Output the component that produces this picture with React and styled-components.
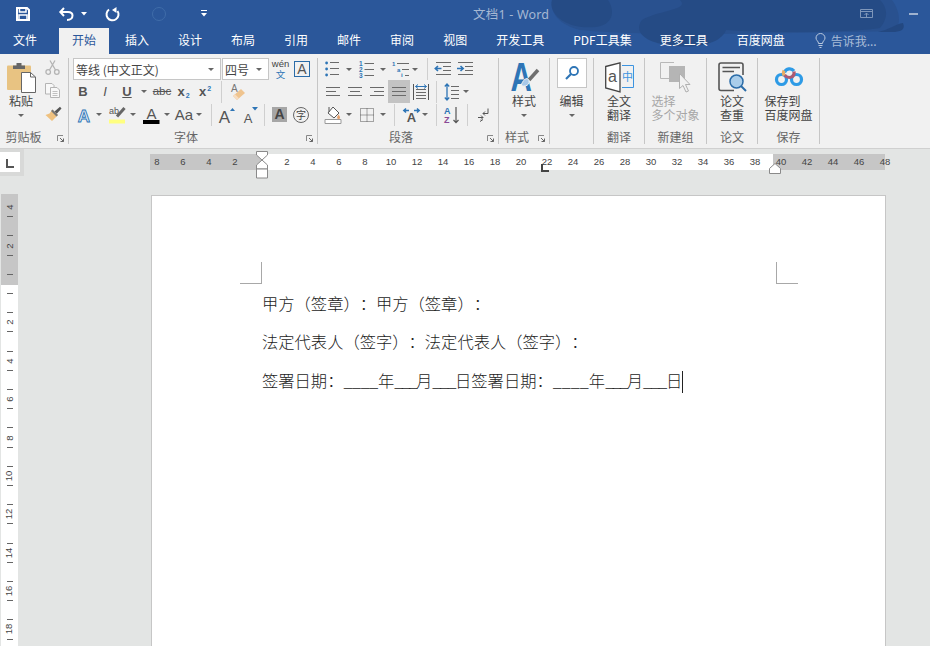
import React from "react";
import styled, { createGlobalStyle } from "styled-components";

const GlobalStyle = createGlobalStyle`
  html, body { margin: 0; padding: 0; background: #e3e5e4; }
  body {
    font-family: "Noto Sans CJK SC", "Noto Sans", sans-serif;
    text-spacing-trim: space-all;
    overflow: hidden;
  }
  svg { overflow: visible; }
`;

const UI_FONT = `"Noto Sans CJK SC", "Noto Sans", sans-serif`;
const LATIN = `"Liberation Sans", Arial, sans-serif`;

const Root = styled.div`
  width: 930px;
  height: 646px;
  overflow: hidden;
  display: flex;
  flex-direction: column;
`;

const Header = styled.header`
  position: relative;
  background: #2b579a;
  height: 54px;
  flex: none;
`;

const Watermark = styled.svg`
  position: absolute;
  left: 0;
  top: 0;
`;

const TitleBar = styled.div`
  position: relative;
  display: flex;
  align-items: center;
  height: 27px;
`;

const QuickAccess = styled.div`
  width: 473px;
  flex: none;
  display: flex;
  align-items: center;
  padding-left: 16px;
  box-sizing: border-box;
`;

const QuickIcon = styled.svg`
  margin-left: ${(p) => p.$ml || 0}px;
  flex: none;
`;

const Title = styled.div`
  font-family: "Noto Sans", ${UI_FONT};
  font-size: 12.5px;
  letter-spacing: 0.2px;
  color: #a5b8d3;
  white-space: nowrap;
`;

const WindowControls = styled.div`
  margin-left: auto;
  padding-right: 12px;
  display: flex;
  align-items: center;
  gap: 36px;
`;

const TabRow = styled.nav`
  position: relative;
  display: flex;
  gap: 3px;
  height: 27px;
`;

const Tab = styled.div`
  padding: 0 13px;
  margin-right: ${(p) => p.$mr || 0}px;
  height: 26px;
  margin-top: 1px;
  line-height: 24px;
  font-size: 12px;
  color: ${(p) => (p.$active ? "#2b579a" : "#fff")};
  background: ${(p) => (p.$active ? "#f1f1f1" : "transparent")};
  white-space: nowrap;
`;

const TellMe = styled.div`
  margin-left: 14px;
  display: flex;
  align-items: center;
  gap: 5px;
  font-size: 12px;
  color: #a9bcd7;
  height: 26px;
`;

const Ribbon = styled.section`
  flex: none;
  height: 95px;
  box-sizing: border-box;
  padding-top: 4px;
  background: #f1f1f1;
  border-bottom: 1px solid #d0d0d0;
  display: flex;
  align-items: flex-start;
  color: #444;
  font-size: 12px;
`;

const Group = styled.div`
  width: ${(p) => p.$w}px;
  height: 86px;
  flex: none;
  box-sizing: border-box;
  border-right: 1px solid #c6c6c6;
  display: flex;
  flex-direction: column;
`;

const GroupBody = styled.div`
  height: 72px;
  flex: none;
  display: ${(p) => (p.$row ? "flex" : "block")};
`;

const Footer = styled.div`
  height: 14px;
  display: flex;
  align-items: center;
`;

const FooterLabel = styled.div`
  flex: 1;
  text-align: center;
  font-size: 12px;
  line-height: 14px;
  color: #666;
  padding-right: ${(p) => p.$pr || 0}px;
`;

const Launcher = styled.svg`
  flex: none;
  margin: 2px 4px 0 3px;
`;

const ToolRow = styled.div`
  display: flex;
  align-items: center;
  height: ${(p) => p.$h || 23}px;
`;

const Tool = styled.div`
  width: ${(p) => p.$w}px;
  height: ${(p) => p.$h || 20}px;
  margin-left: ${(p) => p.$ml || 0}px;
  flex: none;
  display: flex;
  align-items: center;
  justify-content: center;
  background: ${(p) => p.$bg || "transparent"};
`;

const Letter = styled.span`
  font-family: ${(p) => (p.$serif ? `"Liberation Serif", serif` : LATIN)};
  font-size: ${(p) => p.$size || 13}px;
  font-weight: ${(p) => (p.$bold ? 700 : 400)};
  font-style: ${(p) => (p.$italic ? "italic" : "normal")};
  text-decoration: ${(p) => p.$deco || "none"};
  color: ${(p) => p.$color || "#555"};
  line-height: 1.2;
`;

const Sub = styled.span`
  font-family: ${LATIN};
  font-size: 7px;
  font-weight: 700;
  color: #2e75b6;
  align-self: ${(p) => (p.$up ? "flex-start" : "flex-end")};
  margin: ${(p) => (p.$up ? "3px 0 0 1px" : "0 0 3px 1px")};
`;

const Caret = styled.i`
  display: block;
  width: 0;
  height: 0;
  border-left: 3px solid transparent;
  border-right: 3px solid transparent;
  border-top: 3px solid #666;
`;

const Divider = styled.div`
  width: 1px;
  height: 22px;
  flex: none;
  margin-left: ${(p) => p.$ml || 0}px;
  background: #cfcfcf;
`;

const Select = styled.div`
  width: ${(p) => p.$w}px;
  height: 22px;
  margin-left: ${(p) => p.$ml || 0}px;
  flex: none;
  box-sizing: border-box;
  background: #fff;
  border: 1px solid #c6c6c6;
  display: flex;
  align-items: center;
  justify-content: space-between;
  padding: 0 6px 0 2px;
  font-size: 12px;
  color: #444;
  white-space: nowrap;
`;

const BoxedLetter = styled.div`
  width: 16px;
  height: 16px;
  margin-left: 5px;
  flex: none;
  box-sizing: border-box;
  border: 1px solid #2b6ca8;
  display: flex;
  align-items: center;
  justify-content: center;
`;

const CircleChar = styled.div`
  width: 16px;
  height: 16px;
  box-sizing: border-box;
  border: 1px solid #666;
  border-radius: 50%;
  font-size: 10px;
  line-height: 14px;
  text-align: center;
  color: #444;
`;

const Phonetic = styled.div`
  width: 17px;
  margin-left: 3px;
  flex: none;
  display: flex;
  flex-direction: column;
  align-items: center;
  font-size: 9.5px;
  line-height: 10px;
  color: #2e75b6;
  span:first-child {
    font-family: ${LATIN};
    color: #444;
  }
`;

const BigButton = styled.div`
  width: ${(p) => p.$w || "100%"};
  flex: none;
  display: flex;
  flex-direction: column;
  align-items: center;
  font-size: 12px;
  line-height: 14px;
  color: ${(p) => (p.$disabled ? "#a6a6a6" : "#444")};
  white-space: nowrap;
`;

const BigIcon = styled.div`
  height: 36px;
  display: flex;
  align-items: flex-start;
  justify-content: center;
  padding-top: ${(p) => p.$pt ?? 4}px;
  box-sizing: border-box;
`;

const BigCaret = styled(Caret)`
  margin-top: 6px;
`;

const EditBox = styled.div`
  width: 30px;
  height: 30px;
  box-sizing: border-box;
  background: #fff;
  border: 1px solid #c6c6c6;
  display: flex;
  align-items: center;
  justify-content: center;
`;

const SmallColumn = styled.div`
  display: flex;
  flex-direction: column;
  gap: 8px;
  padding: 2px 0 0 3px;
`;

const RulerBar = styled.div`
  position: relative;
  flex: none;
  height: 45px;
  display: flex;
  align-items: flex-start;
`;

const Corner = styled.div`
  width: 24px;
  height: 27px;
  flex: none;
  box-sizing: border-box;
  padding: 3px 4px 4px 0;
  background: #d8d9d8;
`;

const CornerInner = styled.div`
  width: 20px;
  height: 20px;
  background: #fff;
  display: flex;
  align-items: flex-end;
  justify-content: center;
  padding-bottom: 4px;
  box-sizing: border-box;
`;

const Ruler = styled.div`
  position: relative;
  width: 735px;
  height: 16px;
  margin: 5px 0 0 126px;
  background: linear-gradient(90deg, #c6c6c6 111px, #fff 111px, #fff 623px, #c6c6c6 623px);
`;

const RulerStrip = styled.div`
  display: flex;
  margin-left: -6px;
`;

const RulerNum = styled.div`
  width: 26px;
  flex: none;
  text-align: center;
  font-family: ${LATIN};
  font-size: 9.5px;
  line-height: 16px;
  color: #444;
`;

const Marker = styled.svg`
  position: absolute;
  left: ${(p) => p.$x}px;
  top: ${(p) => p.$y}px;
`;

const Body = styled.div`
  flex: 1;
  min-height: 0;
  display: flex;
  align-items: flex-start;
`;

const VRuler = styled.div`
  width: 17px;
  height: 452px;
  margin-left: 1px;
  flex: none;
  overflow: hidden;
  background: linear-gradient(180deg, #c6c6c6 91px, #fff 91px);
`;

const VStrip = styled.div`
  margin-top: -6px;
`;

const VCell = styled.div`
  height: 38.4px;
  box-sizing: border-box;
  padding: 9.1px 0;
  display: flex;
  flex-direction: column;
  align-items: center;
  justify-content: space-between;
`;

const VTick = styled.div`
  width: 6px;
  height: 1px;
  background: ${(p) => (p.$hidden ? "transparent" : "#666")};
`;

const VNum = styled.div`
  font-family: ${LATIN};
  font-size: 9.5px;
  line-height: 10px;
  height: 10px;
  color: #444;
  transform: rotate(-90deg);
`;

const Page = styled.main`
  position: relative;
  width: 735px;
  height: 460px;
  margin: 1px 0 0 133px;
  box-sizing: border-box;
  background: #fff;
  border: 1px solid #c6c6c6;
  padding: 88px 0 0 110px;
`;

const CropMark = styled.div`
  position: absolute;
  top: 66px;
  width: 22px;
  height: 22px;
  box-sizing: border-box;
  left: ${(p) => p.$x}px;
  border-bottom: 1px solid #a8a8a8;
  ${(p) => (p.$side === "left" ? "border-right" : "border-left")}: 1px solid #a8a8a8;
`;

const Para = styled.p`
  margin: 0;
  height: 38.4px;
  line-height: 38.4px;
  font-size: 16.3px;
  font-weight: 300;
  color: #1c1c1c;
  white-space: pre;
`;

const Blank = styled.span`
  letter-spacing: ${(p) => p.$ls}px;
`;

const TextCaret = styled.span`
  display: inline-block;
  width: 1px;
  height: 22px;
  background: #222;
  vertical-align: -6px;
`;

const Launch = () => (
  <Launcher width="7" height="7" viewBox="0 0 7 7">
    <path d="M.5 6V.5H6" fill="none" stroke="#888" />
    <path d="M3 3l3.5 3.5M6.5 3.5v3h-3" fill="none" stroke="#666" />
  </Launcher>
);

const LINE = "#6a6a6a";
const BLUE = "#2e75b6";

const Lines = ({ rows, size = 16 }) => (
  <svg width={size} height="16" viewBox={`0 0 ${size} 16`}>
    {rows.map(([x1, x2, y], i) => (
      <path key={i} d={`M${x1} ${y + 0.5}H${x2}`} stroke={LINE} />
    ))}
  </svg>
);

const Bullets = () => (
  <svg width="16" height="16" viewBox="0 0 16 16">
    {[2, 8, 14].map((y) => (
      <g key={y}>
        <circle cx="1.6" cy={y} r="1.4" fill={BLUE} />
        <path d={`M5 ${y - 0.5}H14`} stroke={LINE} />
      </g>
    ))}
  </svg>
);

const Numbered = () => (
  <svg width="16" height="18" viewBox="0 0 16 18">
    {["1", "2", "3"].map((n, i) => (
      <g key={n}>
        <text x="0" y={5.5 + i * 6} fontSize="6.5" fontWeight="700" fontFamily={LATIN} fill={BLUE}>{n}</text>
        <path d={`M5.5 ${3.5 + i * 6}H15`} stroke={LINE} />
      </g>
    ))}
  </svg>
);

const Multilevel = () => (
  <svg width="18" height="18" viewBox="0 0 18 18">
    <text x="0" y="6" fontSize="6" fontWeight="700" fontFamily={LATIN} fill={BLUE}>1</text>
    <path d="M5 3.5H17" stroke={LINE} />
    <text x="5" y="11.5" fontSize="6" fontWeight="700" fontFamily={LATIN} fill={BLUE}>a</text>
    <path d="M10 9.5H17" stroke={LINE} />
    <text x="9" y="17" fontSize="6" fontWeight="700" fontFamily={LATIN} fill={BLUE}>i</text>
    <path d="M13 15.5H17" stroke={LINE} />
  </svg>
);

const IndentIcon = ({ increase }) => (
  <svg width="18" height="16" viewBox="0 0 18 16">
    <path d="M2 1.5H17M9 5.5H17M9 9.5H17M2 13.5H17" stroke={LINE} fill="none" />
    <path
      d={increase ? "M1 7.5H7M4.500 5L7.200 7.500 4.500 10" : "M7.500 7.500H1.500M4 5L1.300 7.500 4 10"}
      stroke={BLUE}
      strokeWidth="1.6"
      fill="none"
    />
  </svg>
);

const AlignIcon = ({ rows }) => <Lines rows={rows} />;

const Distributed = () => (
  <svg width="16" height="16" viewBox="0 0 16 16">
    <path d="M.5 0V16M15.5 0V16" stroke="#555" />
    <path d="M3 5.5H13M3 8.5H13M3 11.5H13M3 14.5H13" stroke={LINE} />
    <path d="M2.5 2.5H13.5M5 .5L2.5 2.5 5 4.5M11 .5l2.5 2-2.5 2" stroke={BLUE} fill="none" />
  </svg>
);

const LineSpacing = () => (
  <svg width="16" height="18" viewBox="0 0 16 18">
    <path d="M7 3.5H15M7 7.5H15M7 11.5H15M7 15.5H15" stroke={LINE} />
    <path d="M3 1V17M.8 3.5L3 1l2.2 2.5M.8 14.5L3 17l2.2-2.5" stroke={BLUE} strokeWidth="1.3" fill="none" />
  </svg>
);

const Shading = () => (
  <svg width="18" height="18" viewBox="0 0 18 18">
    <path d="M9 1l6 6-5 5-6-5z" fill="#fff" stroke="#555" />
    <path d="M5 1v5" stroke="#555" />
    <path d="M14.5 8.5c1 1.4 1.6 2.2 1.6 3a1.5 1.5 0 0 1-3 0c0-.8.6-1.6 1.4-3z" fill="#e8a06a" />
    <path d="M1 13.5V17.5H17V13.5z" fill="#fff" stroke="#999" />
  </svg>
);

const Borders = () => (
  <svg width="14" height="14" viewBox="0 0 14 14">
    <path d="M.5.5H13.5V13.5H.5zM7 .5V13.5M.5 7H13.5" fill="none" stroke="#555" strokeDasharray="1 1" />
  </svg>
);

const TextDir = () => (
  <svg width="17" height="16" viewBox="0 0 17 16">
    <text x="8.5" y="15" textAnchor="middle" fontSize="13" fontWeight="700" fontFamily={LATIN} fill="#555">A</text>
    <path d="M.8 3.5H6M3 1.5L.8 3.5 3 5.5M16.2 3.5H11M14 1.5l2.2 2-2.2 2" stroke={BLUE} strokeWidth="1.5" fill="none" />
  </svg>
);

const SortIcon = () => (
  <svg width="16" height="18" viewBox="0 0 16 18">
    <text x="0" y="8" fontSize="9" fontWeight="700" fontFamily={LATIN} fill={BLUE}>A</text>
    <text x="0" y="17" fontSize="9" fontWeight="700" fontFamily={LATIN} fill="#8a4a96">Z</text>
    <path d="M12 1V16.5M9.5 14l2.5 2.7L14.5 14" stroke="#555" strokeWidth="1.2" fill="none" />
  </svg>
);

const ShowMarks = () => (
  <svg width="11" height="14" viewBox="0 0 11 14">
    <path d="M10 .5V5.5H5M7 3.5L5 5.5 7 7.5" stroke="#555" fill="none" />
    <path d="M0 9.5H5M3 7.5l2 2-2 2M2 13.5l3-2" stroke="#555" fill="none" />
  </svg>
);

const GlowA = () => (
  <svg width="16" height="18" viewBox="0 0 16 18">
    <text x="8" y="16" textAnchor="middle" fontSize="17" fontWeight="700" fontFamily={LATIN} fill="#e3eef9" stroke="#2e75b6" strokeWidth="0.9">A</text>
  </svg>
);

const Highlight = () => (
  <svg width="17" height="18" viewBox="0 0 17 18">
    <text x="0" y="8" fontSize="9" fontFamily={LATIN} fill="#555">ab</text>
    <path d="M15.5 2L8 10.5" stroke="#666" strokeWidth="3" />
    <path d="M0 13.5h16v4H0z" fill="#ffff80" />
  </svg>
);

const FontColor = () => (
  <svg width="17" height="18" viewBox="0 0 17 18">
    <text x="8.5" y="13" textAnchor="middle" fontSize="15" fontFamily={LATIN} fill="#555">A</text>
    <path d="M0 14h16.5v4H0z" fill="#000" />
  </svg>
);

const SizeA = ({ size, up }) => (
  <svg width="20" height="18" viewBox="0 0 20 18">
    <text x={up ? 7.5 : 9} y="17" textAnchor="middle" fontSize={size} fontFamily={LATIN} fill="#555">A</text>
    <path d={up ? "M13 5l2.5-3L18 5z" : "M13 1h6l-3 3.5z"} fill="#2e75b6" />
  </svg>
);

const Eraser = () => (
  <svg width="16" height="18" viewBox="0 0 16 18">
    <text x="1" y="9" fontSize="10" fontFamily={LATIN} fill="#777">A</text>
    <path d="M3 13l8-7 4 4-8 7z" fill="#efc48f" />
    <path d="M3 13l2-1.8 4 4L7 17z" fill="#f6dcc0" />
  </svg>
);

const GrayA = styled(Tool)`
  background: #a6a6a6;
  width: 15px;
  height: 15px;
  margin-left: 7px;
`;

const PasteIcon = () => (
  <svg width="29" height="31" viewBox="0 0 29 31">
    <rect x="0" y="3.5" width="24" height="24.5" rx="1" fill="#e8c382" />
    <path d="M6 7V3.5H9.5V1H14.5V3.5H18V7z" fill="#666" />
    <path d="M14.5 10.5H23.5L28.5 15V30.5H14.5z" fill="#fff" stroke="#666" />
    <path d="M23.5 10.5V15H28.5" fill="none" stroke="#666" />
  </svg>
);

const CutIcon = () => (
  <svg width="15" height="15" viewBox="0 0 15 15">
    <g stroke="#b4b4b4" strokeWidth="1.3" fill="none">
      <circle cx="3.2" cy="12" r="2.3" />
      <circle cx="11.8" cy="12" r="2.3" />
      <path d="M4.5 10L10 .5M10.5 10L5 .5" />
    </g>
  </svg>
);

const CopyIcon = () => (
  <svg width="15" height="15" viewBox="0 0 15 15">
    <g stroke="#b4b4b4" fill="#f8f8f8">
      <path d="M.5.5H7L9 2.5V11H.5z" />
      <path d="M5.5 4.5H12L14.5 7V14.5H5.5z" />
    </g>
    <path d="M7.5 8.5H12.5M7.5 10.5H12.5M7.5 12.5H12.5" stroke="#c0c0c0" />
  </svg>
);

const PainterIcon = () => (
  <svg width="17" height="15" viewBox="0 0 17 15">
    <path d="M9.5 5.5L15 .8 16.5 2.5 11.5 8z" fill="#555" />
    <path d="M7.5 3.5l5.5 5.5-3 3-3 3L.5 9l4-1.5z" fill="#efc17f" />
    <path d="M7.5 3.5l5.5 5.5-1.5 1.5L6 5z" fill="#777" />
  </svg>
);

const StyleIcon = () => (
  <svg width="30" height="32" viewBox="0 0 30 32">
    <text x="0" y="0" fontSize="40" fontWeight="700" fontFamily={LATIN} fill="#2e75b6" transform="translate(1.500 29) scale(.74 1)">A</text>
    <path d="M29 8L20 18" stroke="#6f6f6f" strokeWidth="3.500" />
    <path d="M18 16.500c-3 .5-4.500 3-6 7 3 1.300 6 .5 7.500-1.500 1.300-1.800.5-5-1.500-5.500z" fill="#a8c8e8" stroke="#f1f1f1" />
  </svg>
);

const SearchIcon = () => (
  <svg width="16" height="16" viewBox="0 0 16 16">
    <circle cx="10" cy="6" r="4" fill="none" stroke="#2e75b6" strokeWidth="1.8" />
    <path d="M7 9L2 14" stroke="#2e75b6" strokeWidth="2.2" />
  </svg>
);

const TranslateIcon = () => (
  <svg width="29" height="31" viewBox="0 0 29 31">
    <path d="M.7 4.500L15 .8V30L.7 26z" fill="#fff" stroke="#444" strokeWidth="1.3" />
    <text x="7.500" y="20" textAnchor="middle" fontSize="16" fontFamily={LATIN} fill="#555">a</text>
    <path d="M17 3.500H28.500V25.500H17" fill="none" stroke="#3d94e0" />
    <text x="22.500" y="18.500" textAnchor="middle" fontSize="11" fontFamily={UI_FONT} fill="#3d94e0">中</text>
  </svg>
);

const MultiSelectIcon = () => (
  <svg width="32" height="31" viewBox="0 0 32 31">
    <path d="M14 .5H.5V16.500H9" fill="none" stroke="#b8b8b8" />
    <rect x="9" y="4" width="16" height="16" fill="#b5b5b5" />
    <path d="M19.500 11.500V26.500L23 23.500 26 30 28.500 29 25.500 22.500H30z" fill="#f1f1f1" stroke="#b0b0b0" />
  </svg>
);

const ThesisIcon = () => (
  <svg width="29" height="30" viewBox="0 0 29 30">
    <path d="M16 28.500H3A2 2 0 0 1 1 26.500V3A2 2 0 0 1 3 1H23A2 2 0 0 1 25 3V13" fill="none" stroke="#555" strokeWidth="1.600" />
    <path d="M4.500 5.500H22M4.500 9.500H16" stroke="#555" strokeWidth="1.600" />
    <circle cx="18.500" cy="19.500" r="6.500" fill="#a9cdea" stroke="#2b6ca8" strokeWidth="1.500" />
    <path d="M23 24L28 29" stroke="#2b6ca8" strokeWidth="2" />
  </svg>
);

const BaiduIcon = () => (
  <svg width="28" height="23" viewBox="0 0 28 23">
    <g fill="none" strokeWidth="3.200">
      <circle cx="6.500" cy="15.500" r="5" stroke="#2e9be6" />
      <circle cx="21.500" cy="15.500" r="5" stroke="#2e9be6" />
      <path d="M9.500 8.500A5.500 5.500 0 0 1 19 7" stroke="#2e9be6" />
      <path d="M19 7.500A5.500 5.500 0 0 1 17.500 12.500C15 14 11.500 13.500 9.500 11" stroke="#ad5a72" />
      <path d="M9 11.500A5.500 5.500 0 0 1 9 6.500" stroke="#e9ab63" />
    </g>
  </svg>
);

const HourGlass = () => (
  <Marker $x={106} $y={-3} width="12" height="28" viewBox="0 0 12 28">
    <path d="M.5.500H11.500V4L6 9 .5 4z" fill="#fff" stroke="#8a8a8a" />
    <path d="M6 9L.5 14V18H11.500V14z" fill="#fff" stroke="#8a8a8a" />
    <path d="M.5 18H11.500V27H.5z" fill="#fff" stroke="#8a8a8a" />
  </Marker>
);

const RightIndent = () => (
  <Marker $x={619} $y={9} width="12" height="11" viewBox="0 0 12 11">
    <path d="M6 .5L11.500 5.500V10.500H.5V5.500z" fill="#fff" stroke="#8a8a8a" />
  </Marker>
);

const TabStop = () => (
  <Marker $x={391} $y={10} width="8" height="8" viewBox="0 0 8 8">
    <path d="M1 0V7H8" fill="none" stroke="#444" strokeWidth="2" />
  </Marker>
);

const hNums = [8, 6, 4, 2, "", 2, 4, 6, 8, 10, 12, 14, 16, 18, 20, 22, 24, 26, 28, 30, 32, 34, 36, 38, 40, 42, 44, 46, 48];
const vNums = [4, 2, "", 2, 4, 6, 8, 10, 12, 14, 16, 18];

const TABS = ["插入", "设计", "布局", "引用", "邮件", "审阅", "视图", "开发工具"];

export default function App() {
  return (
    <Root>
      <GlobalStyle />
      <Header>
        <Watermark width="930" height="54" viewBox="0 0 930 54">
          <path d="M552 0C550 10 556 24 580 30C640 36 760 34 896 31C902 20 898 8 892 0z" fill="#29518f" />
          <path d="M552 0C548 14 566 30 596 27C612 25 616 12 608 0z" fill="#254b85" />
          <path d="M642 20C634 30 642 42 668 45C700 50 722 42 726 30C760 33 850 33 880 28C890 16 886 6 880 0H680C690 10 660 10 642 20z" fill="#254b85" />
          <path d="M878 32C888 30 896 24 903 23C906 30 900 32 892 32z" fill="#234881" />
        </Watermark>
        <TitleBar>
          <QuickAccess>
            <QuickIcon width="14" height="14" viewBox="0 0 14 14">
              <path d="M1 1H11L13 3V13H1z" fill="none" stroke="#fff" strokeWidth="2" />
              <path d="M3.500 1V5H10V1M3 8H11V13H3z" fill="none" stroke="#fff" strokeWidth="1.500" />
            </QuickIcon>
            <QuickIcon $ml={29} width="15" height="14" viewBox="0 0 15 14">
              <path d="M5 1L1.300 5 5 9" fill="none" stroke="#fff" strokeWidth="2" />
              <path d="M2 5H9C12 5 13.500 6.500 13.500 8.500S12 13 8 13" fill="none" stroke="#fff" strokeWidth="2" />
            </QuickIcon>
            <QuickIcon $ml={7} width="6" height="4" viewBox="0 0 6 4">
              <path d="M0 0H6L3 3.500z" fill="#fff" />
            </QuickIcon>
            <QuickIcon $ml={18} width="14" height="14" viewBox="0 0 14 14">
              <path d="M4 2.500A6 6 0 1 0 12.500 4" fill="none" stroke="#fff" strokeWidth="2" />
              <path d="M7.500 0V6L12 3z" fill="#fff" transform="rotate(180 9.500 3)" />
            </QuickIcon>
            <QuickIcon $ml={33} width="14" height="14" viewBox="0 0 14 14">
              <circle cx="7" cy="7" r="6.500" fill="none" stroke="#3f6ca9" />
            </QuickIcon>
            <QuickIcon $ml={35} width="6" height="7" viewBox="0 0 6 7">
              <path d="M0 .5H6" stroke="#fff" />
              <path d="M0 3H6L3 6.500z" fill="#fff" />
            </QuickIcon>
          </QuickAccess>
          <Title>文档1 - Word</Title>
          <WindowControls>
            <svg width="13" height="9" viewBox="0 0 13 9">
              <path d="M.5.500H12.500V8.500H.5zM.5 2.500H12.500" fill="none" stroke="#7f97ba" />
              <path d="M6.500 8V4M4.500 6l2-2 2 2" fill="none" stroke="#7f97ba" />
            </svg>
            <svg width="9" height="2" viewBox="0 0 9 2">
              <path d="M0 1H9" stroke="#9fb2cf" strokeWidth="2" />
            </svg>
          </WindowControls>
        </TitleBar>
        <TabRow>
          <Tab $mr={6}>文件</Tab>
          <Tab $active>开始</Tab>
          {TABS.map((t) => (
            <Tab key={t}>{t}</Tab>
          ))}
          <Tab $mr={-1}>PDF工具集</Tab>
          <Tab>更多工具</Tab>
          <Tab>百度网盘</Tab>
          <TellMe>
            <svg width="11" height="15" viewBox="0 0 11 15">
              <path d="M3.500 10.500C3.500 8 1 7.500 1 5A4.500 4.500 0 0 1 10 5C10 7.500 7.500 8 7.500 10.500z" fill="none" stroke="#b9c8de" />
              <path d="M3.500 12.500H7.500M4.500 14.500H6.500" stroke="#b9c8de" />
            </svg>
            <span>告诉我...</span>
          </TellMe>
        </TabRow>
      </Header>

      <Ribbon>
        <Group $w={69}>
          <GroupBody $row>
            <BigButton $w="42px">
              <BigIcon>
                <PasteIcon />
              </BigIcon>
              粘贴
              <BigCaret />
            </BigButton>
            <SmallColumn>
              <CutIcon />
              <CopyIcon />
              <PainterIcon />
            </SmallColumn>
          </GroupBody>
          <Footer>
            <FooterLabel $pr={7}>剪贴板</FooterLabel>
            <Launch />
          </Footer>
        </Group>

        <Group $w={249}>
          <GroupBody>
            <ToolRow $h={22}>
              <Select $w={148} $ml={4}>
                等线 (中文正文)
                <Caret />
              </Select>
              <Select $w={47} $ml={1}>
                四号
                <Caret />
              </Select>
              <Phonetic>
                <span>wén</span>
                <span>文</span>
              </Phonetic>
              <BoxedLetter>
                <Letter $size={14}>A</Letter>
              </BoxedLetter>
            </ToolRow>
            <ToolRow>
              <Tool $w={22} $ml={3}><Letter $bold>B</Letter></Tool>
              <Tool $w={22}><Letter $italic>I</Letter></Tool>
              <Tool $w={22}><Letter $deco="underline" $bold>U</Letter></Tool>
              <Tool $w={12}><Caret /></Tool>
              <Tool $w={22} $ml={1}><Letter $size={11.5} $deco="line-through">abc</Letter></Tool>
              <Tool $w={21}><Letter $bold $size={13}>x</Letter><Sub>2</Sub></Tool>
              <Tool $w={22}><Letter $bold $size={13}>x</Letter><Sub $up>2</Sub></Tool>
              <Divider $ml={5} />
              <Tool $w={22} $ml={5}><Eraser /></Tool>
            </ToolRow>
            <ToolRow>
              <Tool $w={20} $ml={5}><GlowA /></Tool>
              <Tool $w={9}><Caret /></Tool>
              <Tool $w={20} $ml={4}><Highlight /></Tool>
              <Tool $w={12}><Caret /></Tool>
              <Tool $w={20} $ml={2}><FontColor /></Tool>
              <Tool $w={12}><Caret /></Tool>
              <Tool $w={20} $ml={1}><Letter $size={15}>Aa</Letter></Tool>
              <Tool $w={10}><Caret /></Tool>
              <Divider $ml={7} />
              <Tool $w={20} $ml={5}><SizeA size={17} up /></Tool>
              <Tool $w={20} $ml={2}><SizeA size={13} /></Tool>
              <Divider $ml={5} />
              <GrayA $w={15} $h={15}><Letter $bold $size={14} $color="#444">A</Letter></GrayA>
              <Tool $w={20} $ml={4}><CircleChar>字</CircleChar></Tool>
            </ToolRow>
          </GroupBody>
          <Footer>
            <FooterLabel>字体</FooterLabel>
            <Launch />
          </Footer>
        </Group>

        <Group $w={181}>
          <GroupBody>
            <ToolRow $h={22}>
              <Tool $w={16} $ml={7}><Bullets /></Tool>
              <Tool $w={10} $ml={3}><Caret /></Tool>
              <Tool $w={16} $ml={5}><Numbered /></Tool>
              <Tool $w={10} $ml={3}><Caret /></Tool>
              <Tool $w={18} $ml={4}><Multilevel /></Tool>
              <Tool $w={10}><Caret /></Tool>
              <Divider $ml={7} />
              <Tool $w={18} $ml={6}><IndentIcon /></Tool>
              <Tool $w={18} $ml={4}><IndentIcon increase /></Tool>
            </ToolRow>
            <ToolRow>
              <Tool $w={16} $ml={7}><AlignIcon rows={[[1, 15, 3], [1, 11, 7], [1, 15, 11]]} /></Tool>
              <Tool $w={16} $ml={6}><AlignIcon rows={[[1, 15, 3], [3, 13, 7], [1, 15, 11]]} /></Tool>
              <Tool $w={16} $ml={6}><AlignIcon rows={[[1, 15, 3], [5, 15, 7], [1, 15, 11]]} /></Tool>
              <Tool $w={22} $h={23} $ml={3} $bg="#c3c3c3"><AlignIcon rows={[[1, 15, 3], [1, 15, 7], [1, 15, 11]]} /></Tool>
              <Tool $w={18} $ml={2}><Distributed /></Tool>
              <Divider $ml={6} />
              <Tool $w={16} $ml={7}><LineSpacing /></Tool>
              <Tool $w={10} $ml={1}><Caret /></Tool>
            </ToolRow>
            <ToolRow>
              <Tool $w={18} $ml={6}><Shading /></Tool>
              <Tool $w={10} $ml={2}><Caret /></Tool>
              <Tool $w={16} $ml={5}><Borders /></Tool>
              <Tool $w={10} $ml={3}><Caret /></Tool>
              <Divider $ml={6} />
              <Tool $w={18} $ml={7}><TextDir /></Tool>
              <Tool $w={10}><Caret /></Tool>
              <Divider $ml={6} />
              <Tool $w={16} $ml={7}><SortIcon /></Tool>
              <Divider $ml={7} />
              <Tool $w={12} $ml={9}><ShowMarks /></Tool>
            </ToolRow>
          </GroupBody>
          <Footer>
            <FooterLabel>段落</FooterLabel>
            <Launch />
          </Footer>
        </Group>

        <Group $w={51}>
          <GroupBody>
            <BigButton>
              <BigIcon><StyleIcon /></BigIcon>
              样式
              <BigCaret />
            </BigButton>
          </GroupBody>
          <Footer>
            <FooterLabel>样式</FooterLabel>
            <Launch />
          </Footer>
        </Group>

        <Group $w={44}>
          <GroupBody>
            <BigButton>
              <BigIcon $pt={0}>
                <EditBox><SearchIcon /></EditBox>
              </BigIcon>
              编辑
              <BigCaret />
            </BigButton>
          </GroupBody>
        </Group>

        <Group $w={51}>
          <GroupBody>
            <BigButton>
              <BigIcon><TranslateIcon /></BigIcon>
              全文
              <br />
              翻译
            </BigButton>
          </GroupBody>
          <Footer><FooterLabel>翻译</FooterLabel></Footer>
        </Group>

        <Group $w={62}>
          <GroupBody>
            <BigButton $disabled>
              <BigIcon><MultiSelectIcon /></BigIcon>
              选择
              <br />
              多个对象
            </BigButton>
          </GroupBody>
          <Footer><FooterLabel>新建组</FooterLabel></Footer>
        </Group>

        <Group $w={51}>
          <GroupBody>
            <BigButton>
              <BigIcon><ThesisIcon /></BigIcon>
              论文
              <br />
              查重
            </BigButton>
          </GroupBody>
          <Footer><FooterLabel>论文</FooterLabel></Footer>
        </Group>

        <Group $w={62}>
          <GroupBody>
            <BigButton>
              <BigIcon $pt={6}><BaiduIcon /></BigIcon>
              保存到
              <br />
              百度网盘
            </BigButton>
          </GroupBody>
          <Footer><FooterLabel>保存</FooterLabel></Footer>
        </Group>
      </Ribbon>

      <RulerBar>
        <Corner>
          <CornerInner>
            <svg width="8" height="9" viewBox="0 0 8 9">
              <path d="M1 0V8H8" fill="none" stroke="#555" strokeWidth="2" />
            </svg>
          </CornerInner>
        </Corner>
        <Ruler>
          <RulerStrip>
            {hNums.map((n, i) => (
              <RulerNum key={i}>{n}</RulerNum>
            ))}
          </RulerStrip>
          <HourGlass />
          <TabStop />
          <RightIndent />
        </Ruler>
      </RulerBar>

      <Body>
        <VRuler>
          <VStrip>
            {vNums.map((n, i) => (
              <VCell key={i}>
                <VTick $hidden={i === 0} />
                <VNum>{n}</VNum>
                <VTick />
              </VCell>
            ))}
          </VStrip>
        </VRuler>
        <Page>
          <CropMark $x={88} $side="left" />
          <CropMark $x={624} $side="right" />
          <Para>甲方（签章）：甲方（签章）：</Para>
          <Para>法定代表人（签字）：法定代表人（签字）：</Para>
          <Para>
            签署日期：<Blank $ls={-0.4}>____</Blank>年<Blank $ls={-1.8}>___</Blank>月<Blank $ls={-1.4}>___</Blank>日签署日期：<Blank $ls={0}>____</Blank>年<Blank $ls={-1.8}>___</Blank>月<Blank $ls={-1.4}>___</Blank>日
            <TextCaret />
          </Para>
        </Page>
      </Body>
    </Root>
  );
}
